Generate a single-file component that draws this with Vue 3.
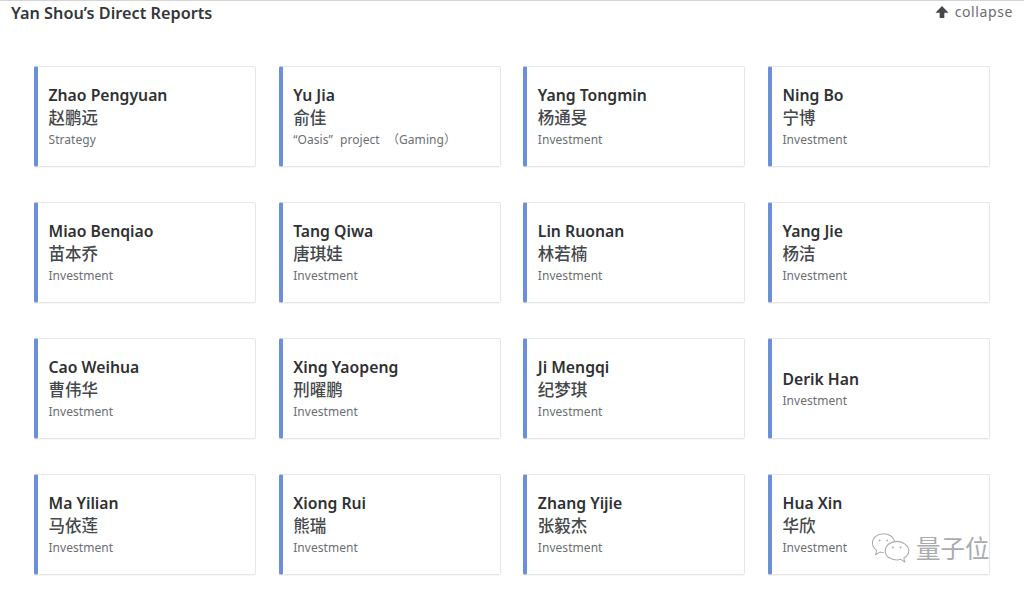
<script setup>
const people = [
  ['Zhao Pengyuan', '赵鹏远', 'Strategy'],
  ['Yu Jia', '俞佳', '“Oasis”\u2009\u2009 project\u2009\u2009 （Gaming）'],
  ['Yang Tongmin', '杨通旻', 'Investment'],
  ['Ning Bo', '宁博', 'Investment'],
  ['Miao Benqiao', '苗本乔', 'Investment'],
  ['Tang Qiwa', '唐琪娃', 'Investment'],
  ['Lin Ruonan', '林若楠', 'Investment'],
  ['Yang Jie', '杨洁', 'Investment'],
  ['Cao Weihua', '曹伟华', 'Investment'],
  ['Xing Yaopeng', '刑曜鹏', 'Investment'],
  ['Ji Mengqi', '纪梦琪', 'Investment'],
  ['Derik Han', '', 'Investment'],
  ['Ma Yilian', '马依莲', 'Investment'],
  ['Xiong Rui', '熊瑞', 'Investment'],
  ['Zhang Yijie', '张毅杰', 'Investment'],
  ['Hua Xin', '华欣', 'Investment'],
]
</script>

<template>
  <div class="page">
    <header class="head">
      <h1 class="title">Yan Shou’s Direct Reports</h1>
      <div class="collapse">
        <svg class="arrow" width="14" height="14" viewBox="0 0 15 15">
          <path d="M7.500 1 L14.500 8.200 L10 8.200 L10 14 L5 14 L5 8.200 L0.500 8.200 Z" fill="#45484b" />
        </svg>
        <span>collapse</span>
      </div>
    </header>
    <section class="grid">
      <article v-for="p in people" :key="p[0]" class="card">
        <div class="name">{{ p[0] }}</div>
        <div v-if="p[1]" class="cn">{{ p[1] }}</div>
        <div class="role">{{ p[2] }}</div>
      </article>
    </section>
    <div class="mark">
      <svg width="40" height="33" viewBox="0 0 42 34" fill="none" stroke="#a9abad" stroke-width="1.100">
        <path d="M13 1.500C6.500 1.500 1.500 5.800 1.500 11.200C1.500 14.400 3.300 17 6 19L4.800 23.500L9.500 20.800C10.800 21.200 12 21.400 13.500 21.400" />
        <path d="M13 1.500C19 1.500 24 5 25 10" />
        <path d="M27 9.500C21 9.500 15 13.500 15 19.500C15 25.500 20.800 29 27 29C28.500 29 30 28.800 31 28.400L35.500 31L34.500 27C37.800 25 39.700 22.500 39.700 19.500C39.700 13.800 33.500 9.500 27 9.500Z" />
        <circle cx="9" cy="8.500" r="1" fill="#a9abad" stroke="none" />
        <circle cx="17" cy="8.500" r="1" fill="#a9abad" stroke="none" />
        <circle cx="23" cy="16" r="1" fill="#a9abad" stroke="none" />
        <circle cx="31" cy="16" r="1" fill="#a9abad" stroke="none" />
      </svg>
      <span class="mark-text">量子位</span>
    </div>
  </div>
</template>

<style>
html, body { margin: 0; background: #fff; }
</style>

<style scoped>
.page {
  position: relative;
  width: 1024px;
  height: 594px;
  box-sizing: border-box;
  overflow: hidden;
  background: #fff;
  border-top: 1px solid #d4d4d4;
  font-family: "Noto Sans", "Noto Sans CJK SC", sans-serif;
  color: #2f3133;
}
.head {
  display: flex;
  justify-content: space-between;
  align-items: flex-start;
  padding: 0 11px 0 11px;
  height: 65px;
}
.title {
  margin: 1px 0 0;
  font-size: 16.250px;
  line-height: 22px;
  font-weight: 600;
  color: #34373a;
}
.collapse {
  display: flex;
  align-items: center;
  gap: 6px;
  font-size: 14px;
  line-height: 22px;
  letter-spacing: 0.6px;
  color: #6a6d70;
}
.grid {
  display: grid;
  grid-template-columns: repeat(4, 222px);
  grid-auto-rows: 101px;
  column-gap: 22.670px;
  row-gap: 35px;
  margin-left: 34px;
}
.card {
  box-sizing: border-box;
  border: 1px solid #e6e6e8;
  border-left: 4px solid #6b8fd8;
  border-radius: 2px;
  padding-left: 10.500px;
  display: flex;
  flex-direction: column;
  justify-content: center;
  box-shadow: 0 1px 1px rgba(0, 0, 0, 0.04);
}
.name {
  margin-top: -1px;
  font-size: 15.750px;
  line-height: 22px;
  font-weight: 600;
  color: #2f3133;
}
.cn {
  margin-top: 1px;
  font-size: 16.500px;
  line-height: 22px;
  font-weight: 500;
  color: #45484b;
}
.role {
  margin-top: 3px;
  font-size: 12px;
  line-height: 16px;
  letter-spacing: 0.05px;
  color: #6c6f72;
}
.mark {
  position: absolute;
  left: 871px;
  top: 531px;
  display: flex;
  align-items: center;
  gap: 5px;
}
.mark-text {
  font-size: 24.500px;
  line-height: 32px;
  color: #a9abad;
}
</style>
